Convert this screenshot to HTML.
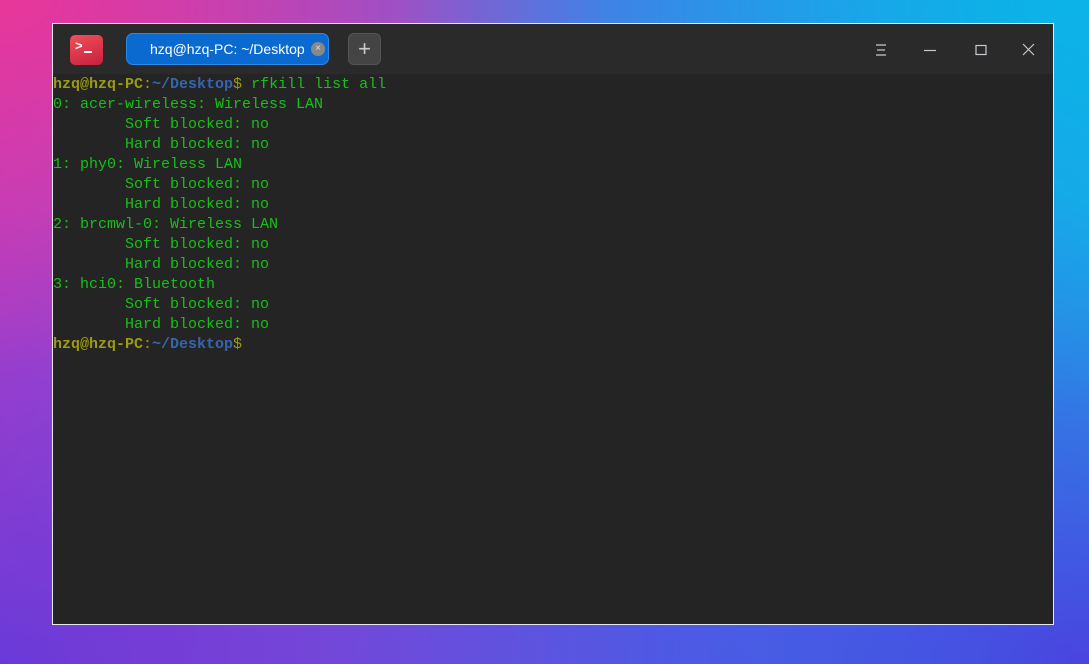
<!DOCTYPE html>
<html><head><style>
html,body{margin:0;padding:0;width:1089px;height:664px;overflow:hidden}
body{position:relative;background:
radial-gradient(ellipse at 100% 0%,#0ab4e8 0%,rgba(10,180,232,0) 45%),
radial-gradient(ellipse at 0% 0%,#e8379a 0%,rgba(232,55,154,0) 40%),
radial-gradient(ellipse at 100% 100%,#4a44e0 0%,rgba(74,68,224,0) 50%),
radial-gradient(ellipse at 0% 100%,#6a3ad8 0%,rgba(106,58,216,0) 50%),
linear-gradient(90deg,#b040c8,#5070e8 60%,#20a0e8);}
.win{position:absolute;left:52px;top:23px;width:1000px;height:600px;border:1px solid #e8e8f0;background:#242424}
.tb{position:absolute;left:0;top:0;width:1000px;height:50px;background:#2a2a2a}
.logo{position:absolute;left:17px;top:11px;width:33px;height:30px;border-radius:5px;background:linear-gradient(160deg,#f0505a,#c8203c);color:#fff;font:bold 13px "Liberation Sans",sans-serif}
.tab{position:absolute;left:73px;top:9px;width:203px;height:32px;border-radius:7px;background:#0a6ad0;border:1px solid #2a88e8;box-sizing:border-box;color:#fff;font:14px "Liberation Sans",sans-serif;line-height:30px;padding-left:23px}
.x{position:absolute;left:184px;top:8px;width:14px;height:14px;border-radius:50%;background:#888;color:#ddd;font-size:10px;line-height:14px;text-align:center}
.plus{position:absolute;left:295px;top:9px;width:33px;height:32px;border-radius:6px;background:#444;border:1px solid #555;box-sizing:border-box;color:#ccc;font:22px "Liberation Sans",sans-serif;text-align:center;line-height:30px}
pre{position:absolute;left:0;top:51px;margin:0;font:15px/20px "Liberation Mono",monospace;color:#17c017}
.u{color:#9a9a14;font-weight:bold}.p{color:#3466b0;font-weight:bold}.c{color:#9a9a14}
</style></head><body>
<div class="win">
<div class="tb">
<div class="logo"><span style="position:absolute;left:5px;top:3px">&gt;</span><span style="position:absolute;left:14px;top:16px;width:8px;height:2px;background:#fff"></span></div>
<div class="tab">hzq@hzq-PC: ~/Desktop<div class="x">×</div></div>
<div class="plus">+</div>
<svg style="position:absolute;left:820px;top:18px" width="170" height="18" fill="none" stroke="#c8c8d0" stroke-width="1.2">
<path d="M3 3h10M4 8h8M3 13h10"/>
<path d="M51 8.5h12"/>
<rect x="103" y="3.5" width="10" height="9"/>
<path d="M150 2l11 11M161 2l-11 11"/>
</svg>
</div>
<pre><span class="u">hzq@hzq-PC</span><span class="c">:</span><span class="p">~/Desktop</span><span class="c">$</span> rfkill list all
0: acer-wireless: Wireless LAN
        Soft blocked: no
        Hard blocked: no
1: phy0: Wireless LAN
        Soft blocked: no
        Hard blocked: no
2: brcmwl-0: Wireless LAN
        Soft blocked: no
        Hard blocked: no
3: hci0: Bluetooth
        Soft blocked: no
        Hard blocked: no
<span class="u">hzq@hzq-PC</span><span class="c">:</span><span class="p">~/Desktop</span><span class="c">$</span></pre>
</div>
</body></html>
